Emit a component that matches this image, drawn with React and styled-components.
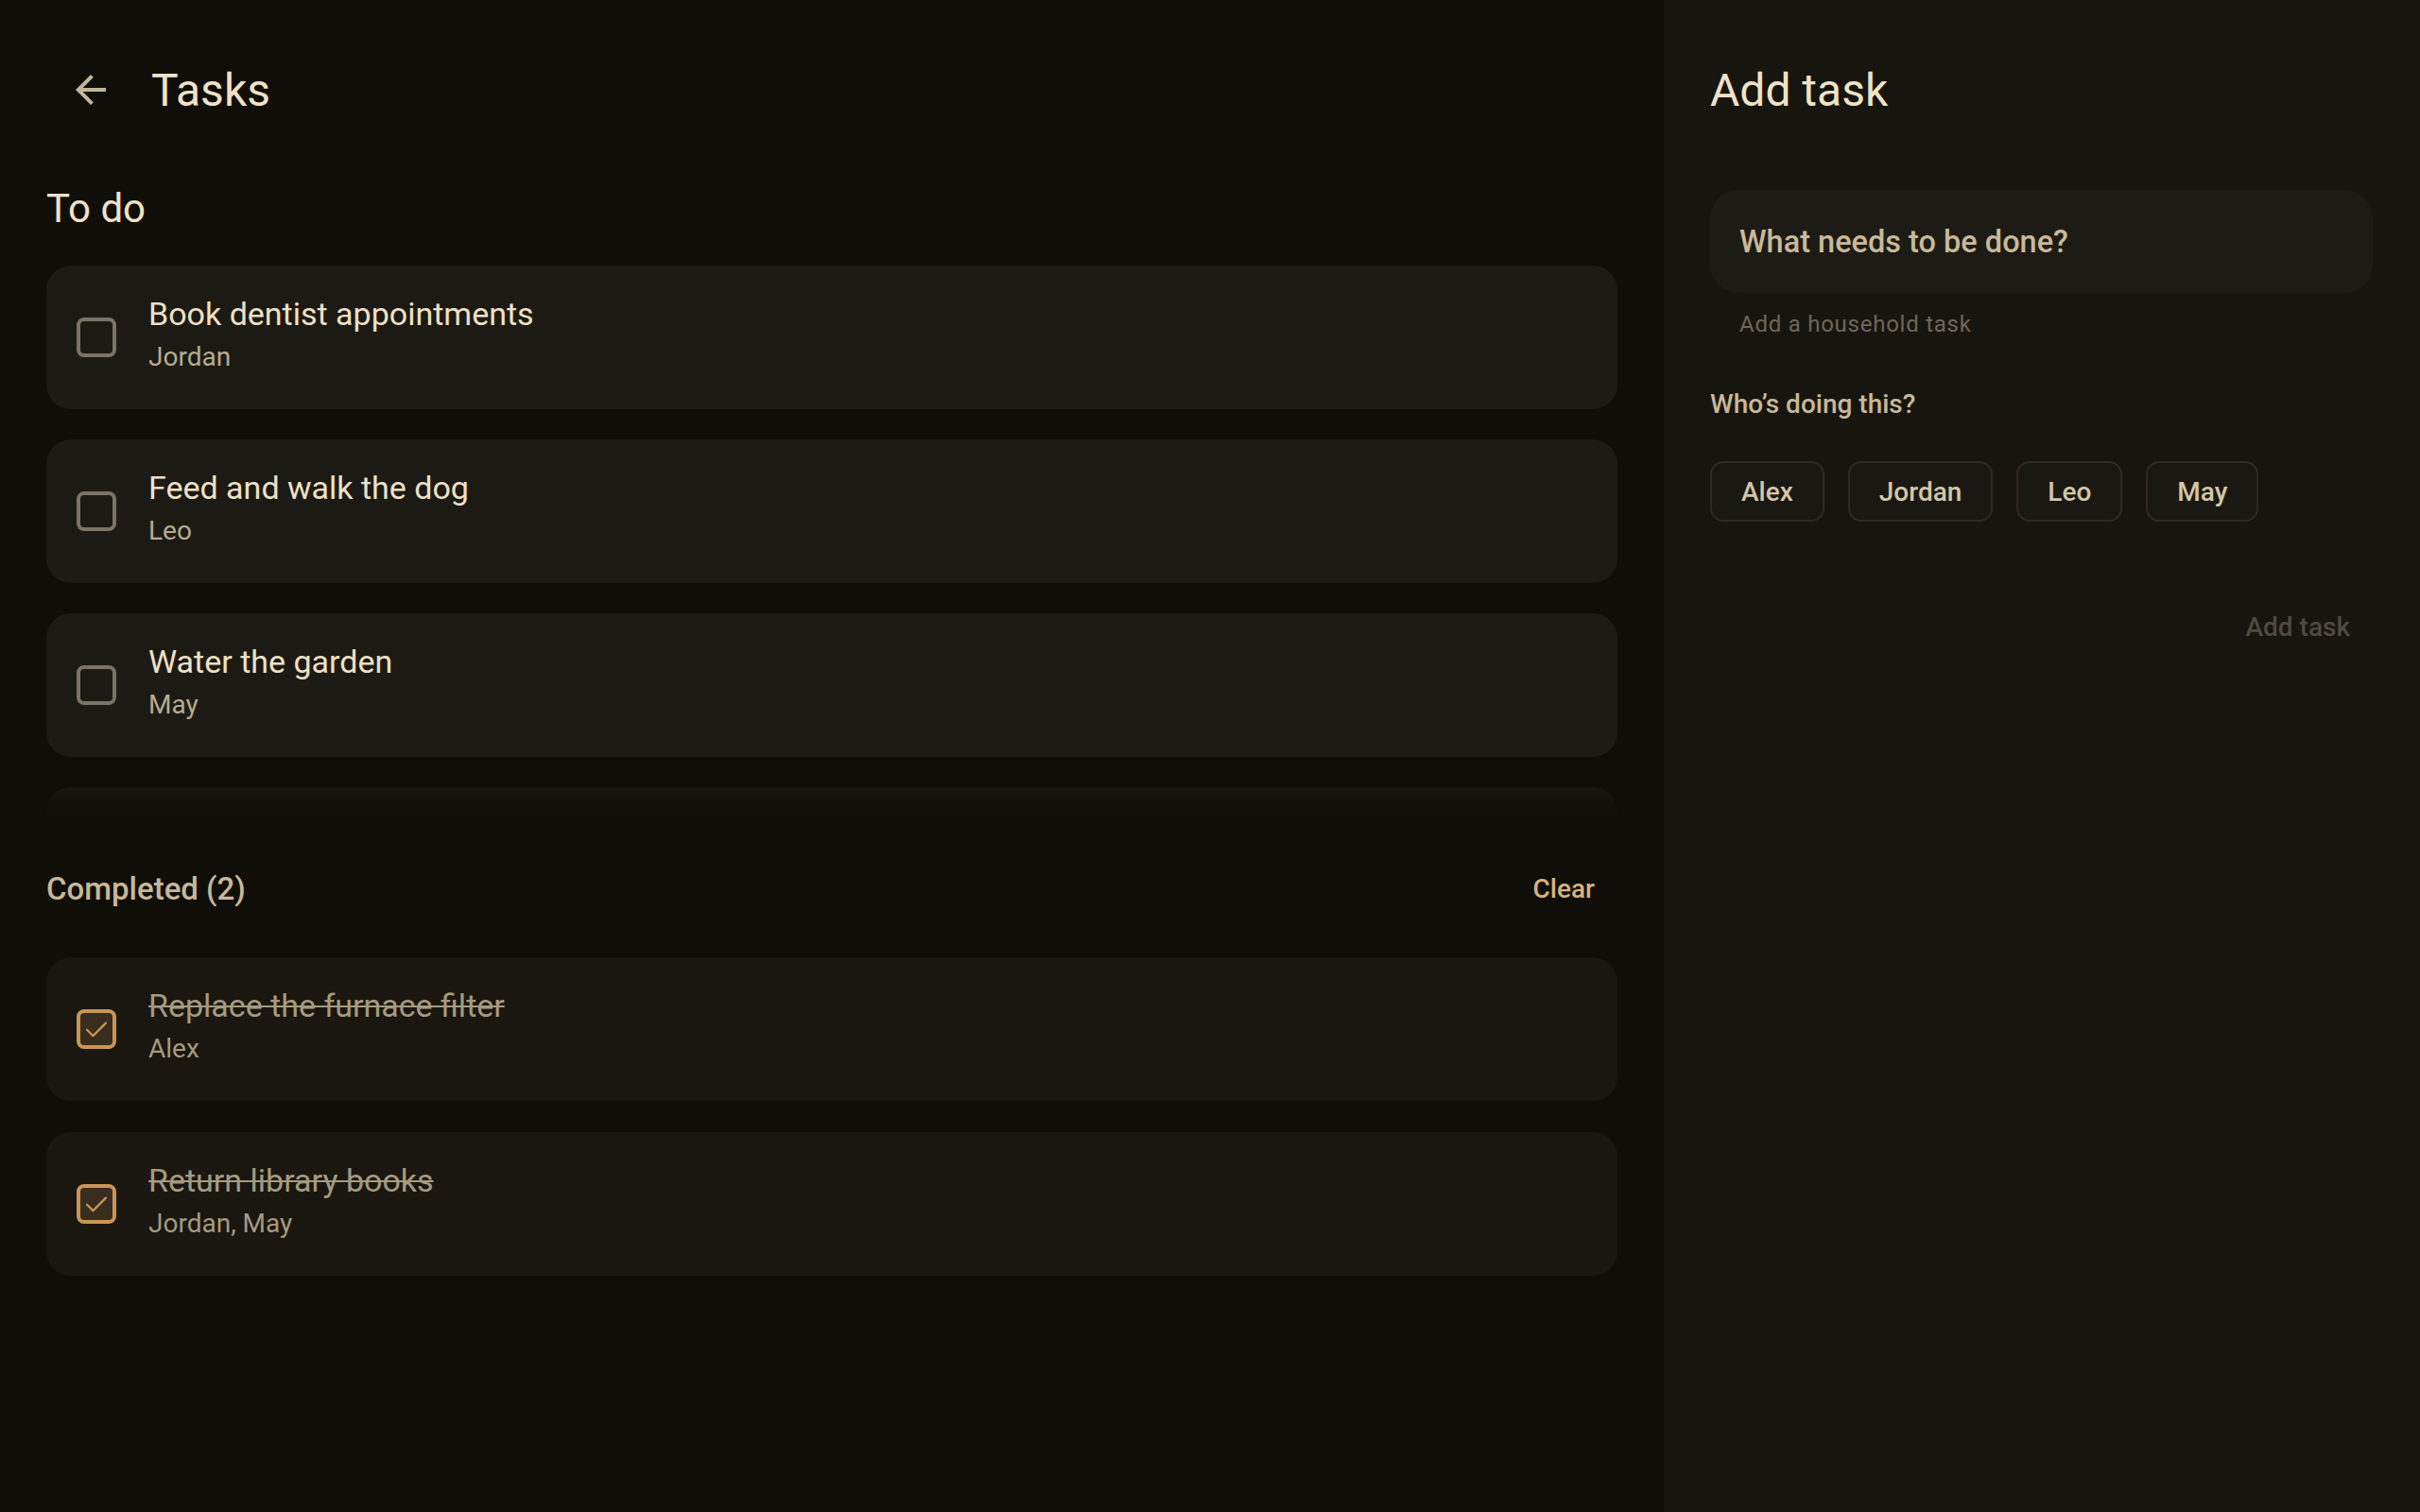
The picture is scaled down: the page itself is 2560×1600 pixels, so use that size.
import React from "react";
import styled, { createGlobalStyle } from "styled-components";

const GlobalStyle = createGlobalStyle`
  * { box-sizing: border-box; }
  html, body { margin: 0; padding: 0; background: #100e09; }
  body { font-family: Roboto, "Noto Sans", sans-serif; }
`;

const Screen = styled.div`
  display: flex;
  width: 2560px;
  height: 1600px;
  overflow: hidden;
  background: #100e09;
`;

const ListPane = styled.main`
  flex: 1;
  display: flex;
  flex-direction: column;
  padding: 0 49px;
`;

const SidePane = styled.aside`
  width: 800px;
  display: flex;
  flex-direction: column;
  padding: 0 50px 0 49px;
  background: #17150f;
`;

const TopBar = styled.header`
  display: flex;
  align-items: center;
  height: 126px;
  margin-top: 32px;
  padding-left: ${(p) => (p.$withBack ? "23px" : "0")};
  gap: 40px;
`;

const IconButton = styled.button`
  width: 48px;
  height: 48px;
  padding: 0;
  border: none;
  background: none;
  color: #c4b69a;
  display: flex;
  align-items: center;
  justify-content: center;
`;

const PageTitle = styled.h1`
  margin: 0;
  font-size: 48px;
  font-weight: 400;
  color: #f0e2c6;
`;

const SectionTitle = styled.h2`
  margin: 38px 0 35px;
  font-size: 42px;
  line-height: 50px;
  font-weight: 400;
  color: #f0e2c6;
`;

const TodoScroller = styled.div`
  position: relative;
  height: 590px;
  overflow: hidden;
  display: flex;
  flex-direction: column;
  gap: 32px;

  &::after {
    content: "";
    position: absolute;
    left: 0;
    right: 0;
    bottom: 0;
    height: 50px;
    background: linear-gradient(rgba(16, 14, 9, 0), #100e09 85%);
  }
`;

const CardList = styled.div`
  display: flex;
  flex-direction: column;
  gap: 33px;
`;

const Card = styled.div`
  flex: none;
  display: flex;
  align-items: center;
  height: 152px;
  padding: 0 32px;
  gap: 34px;
  border-radius: 26px;
  background: ${(p) => (p.$done ? "#19170f" : "#1c1a14")};
`;

const Box = styled.span`
  flex: none;
  width: 42px;
  height: 42px;
  border-radius: 8px;
  border: 4px solid ${(p) => (p.$checked ? "#c99556" : "#7a7366")};
  background: ${(p) => (p.$checked ? "#382d1e" : "transparent")};
  display: flex;
  align-items: center;
  justify-content: center;
  color: #c99556;
`;

const CardText = styled.div`
  display: flex;
  flex-direction: column;
  padding-bottom: 6px;
`;

const CardTitle = styled.div`
  font-size: 34px;
  line-height: 40px;
  color: ${(p) => (p.$done ? "#a69a80" : "#efe0c4")};
  text-decoration: ${(p) => (p.$done ? "line-through" : "none")};
  text-decoration-thickness: 2px;
`;

const CardMeta = styled.div`
  margin-top: 8px;
  font-size: 28px;
  line-height: 36px;
  color: ${(p) => (p.$done ? "#a69a80" : "#b8aa8e")};
`;

const CompletedHeader = styled.div`
  display: flex;
  align-items: center;
  justify-content: space-between;
  height: 80px;
  margin: 29px 0 33px;
`;

const CompletedLabel = styled.h3`
  margin: 0;
  font-size: 33px;
  font-weight: 500;
  color: #c8b898;
`;

const TextButton = styled.button`
  border: none;
  background: none;
  padding: 0 24px;
  height: 80px;
  font-family: inherit;
  font-size: 28px;
  font-weight: 500;
  color: ${(p) => (p.$disabled ? "#4f4a3e" : "#d9b27a")};
`;

const InputField = styled.div`
  margin-top: 43px;
  height: 109px;
  border-radius: 30px;
  background: #1d1b15;
  display: flex;
  align-items: center;
  padding: 0 31px;
  font-size: 32.5px;
  font-weight: 500;
  color: #c9b999;
`;

const Helper = styled.div`
  margin-top: 17px;
  padding-left: 31px;
  font-size: 24px;
  line-height: 32px;
  letter-spacing: 0.75px;
  color: #6f6758;
`;

const FieldLabel = styled.div`
  margin-top: 51px;
  font-size: 28px;
  line-height: 36px;
  font-weight: 500;
  color: #c8b898;
`;

const ChipRow = styled.div`
  display: flex;
  gap: 25px;
  margin-top: 42px;
`;

const Chip = styled.button`
  height: 64px;
  padding: 0 31px;
  border-radius: 14px;
  border: 2px solid #2f2a20;
  background: #1a1812;
  font-family: inherit;
  font-size: 28px;
  font-weight: 500;
  color: #d4c6a8;
`;

const Actions = styled.div`
  display: flex;
  justify-content: flex-end;
  margin-top: 71px;
`;

const BackArrow = () => (
  <svg width="48" height="48" viewBox="0 0 24 24" fill="currentColor">
    <path d="M20 11H7.83l5.59-5.59L12 4l-8 8 8 8 1.41-1.41L7.83 13H20v-2z" />
  </svg>
);

const Check = () => (
  <svg width="34" height="34" viewBox="0 0 24 24" fill="none" stroke="currentColor" strokeWidth="1.6" strokeLinecap="round" strokeLinejoin="round">
    <path d="M5 12.5l4.5 4.5L19 7.5" />
  </svg>
);

const todo = [
  { title: "Book dentist appointments", who: "Jordan" },
  { title: "Feed and walk the dog", who: "Leo" },
  { title: "Water the garden", who: "May" },
  { title: "Take out the recycling", who: "Alex" },
];

const done = [
  { title: "Replace the furnace filter", who: "Alex" },
  { title: "Return library books", who: "Jordan, May" },
];

const people = ["Alex", "Jordan", "Leo", "May"];

function TaskCard({ task, checked }) {
  return (
    <Card $done={checked}>
      <Box $checked={checked}>{checked && <Check />}</Box>
      <CardText>
        <CardTitle $done={checked}>{task.title}</CardTitle>
        <CardMeta $done={checked}>{task.who}</CardMeta>
      </CardText>
    </Card>
  );
}

export default function App() {
  return (
    <>
      <GlobalStyle />
      <Screen>
        <ListPane>
          <TopBar $withBack>
            <IconButton aria-label="Back">
              <BackArrow />
            </IconButton>
            <PageTitle>Tasks</PageTitle>
          </TopBar>

          <SectionTitle>To do</SectionTitle>
          <TodoScroller>
            {todo.map((t) => (
              <TaskCard key={t.title} task={t} />
            ))}
          </TodoScroller>

          <CompletedHeader>
            <CompletedLabel>Completed ({done.length})</CompletedLabel>
            <TextButton>Clear</TextButton>
          </CompletedHeader>
          <CardList>
            {done.map((t) => (
              <TaskCard key={t.title} task={t} checked />
            ))}
          </CardList>
        </ListPane>

        <SidePane>
          <TopBar>
            <PageTitle>Add task</PageTitle>
          </TopBar>
          <InputField>What needs to be done?</InputField>
          <Helper>Add a household task</Helper>
          <FieldLabel>Who’s doing this?</FieldLabel>
          <ChipRow>
            {people.map((p) => (
              <Chip key={p}>{p}</Chip>
            ))}
          </ChipRow>
          <Actions>
            <TextButton $disabled>Add task</TextButton>
          </Actions>
        </SidePane>
      </Screen>
    </>
  );
}
